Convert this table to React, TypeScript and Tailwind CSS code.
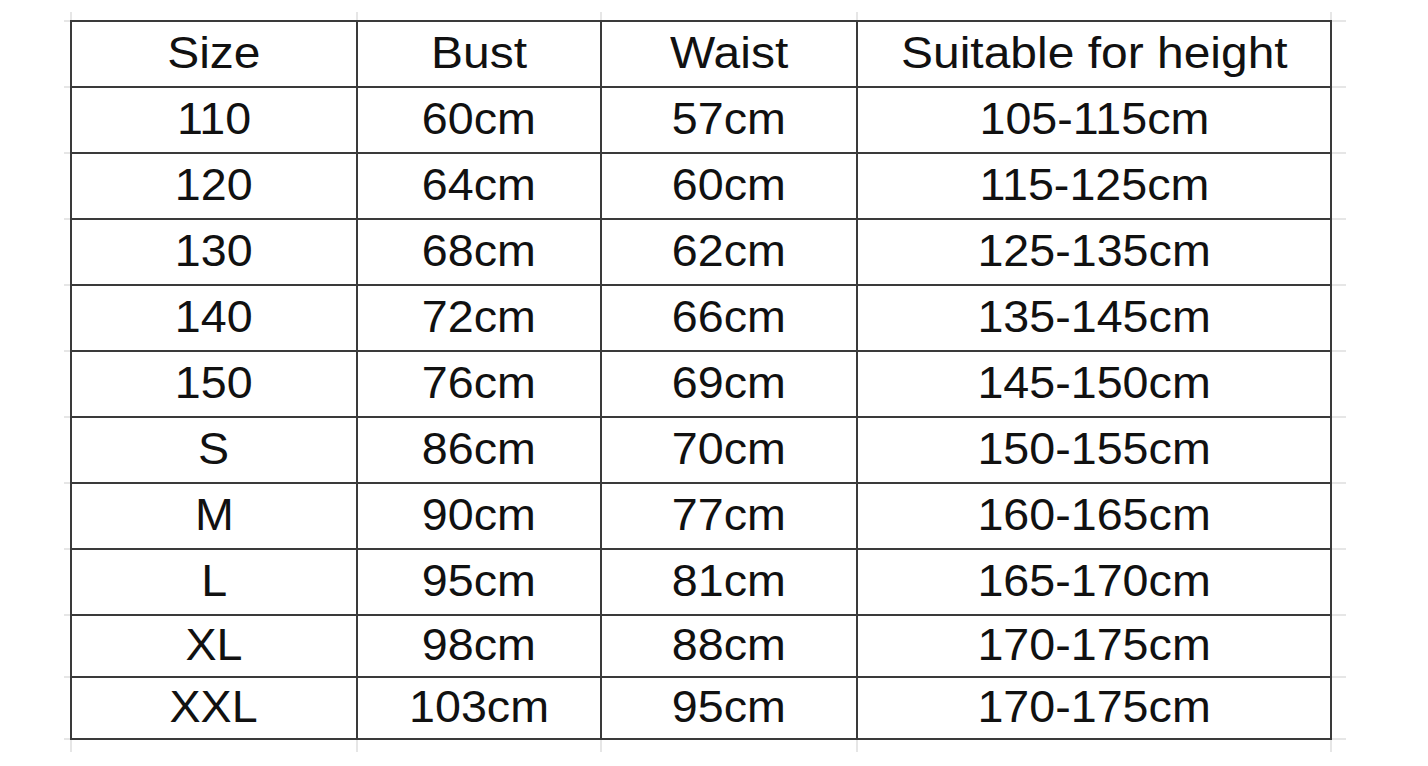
const COLS = ["w-[286px]", "w-[244px]", "w-[256px]", "w-[474px]"];

const HEADER = ["Size", "Bust", "Waist", "Suitable for height"];

const ROWS: { cells: string[]; h: string }[] = [
  { cells: ["110", "60cm", "57cm", "105-115cm"], h: "h-[66px]" },
  { cells: ["120", "64cm", "60cm", "115-125cm"], h: "h-[66px]" },
  { cells: ["130", "68cm", "62cm", "125-135cm"], h: "h-[66px]" },
  { cells: ["140", "72cm", "66cm", "135-145cm"], h: "h-[66px]" },
  { cells: ["150", "76cm", "69cm", "145-150cm"], h: "h-[66px]" },
  { cells: ["S", "86cm", "70cm", "150-155cm"], h: "h-[66px]" },
  { cells: ["M", "90cm", "77cm", "160-165cm"], h: "h-[66px]" },
  { cells: ["L", "95cm", "81cm", "165-170cm"], h: "h-[66px]" },
  { cells: ["XL", "98cm", "88cm", "170-175cm"], h: "h-[62px]" },
  { cells: ["XXL", "103cm", "95cm", "170-175cm"], h: "h-[62px]" },
];

const HEIGHTS = ["h-[66px]", ...ROWS.map((r) => r.h)];

function Stubs({ h }: { h: string }) {
  // faint spreadsheet gridlines poking out above/below the table
  return (
    <div className={`ml-[6px] flex border-l-2 border-[#e6e6e6] ${h}`}>
      {COLS.map((c, i) => (
        <div key={i} className={`${c} border-r-2 border-[#e6e6e6]`} />
      ))}
    </div>
  );
}

function SideStubs({ w }: { w: string }) {
  return (
    <div className={`${w} flex flex-col border-t-2 border-[#e6e6e6]`}>
      {HEIGHTS.map((h, i) => (
        <div key={i} className={`${h} border-b-2 border-[#e6e6e6]`} />
      ))}
    </div>
  );
}

function Row({ cells, h, head }: { cells: string[]; h: string; head?: boolean }) {
  return (
    <div className="flex">
      {cells.map((t, i) => (
        <div
          key={i}
          className={`${COLS[i]} ${h} flex items-center justify-center border-r-2 border-b-2 border-[#3a3a3a] pb-[3px]`}
        >
          <span className={`inline-block leading-none ${head ? "scale-x-[1.09]" : "scale-x-[1.06]"}`}>
            {t}
          </span>
        </div>
      ))}
    </div>
  );
}

export default function App() {
  return (
    <div
      className="w-[1428px] h-[766px] bg-white text-[44px] text-[#111] pt-[12px] pl-[64px]"
      style={{ fontFamily: '"Liberation Sans", Arial, sans-serif' }}
    >
      <Stubs h="h-[8px]" />
      <div className="flex">
        <SideStubs w="w-[6px]" />
        <div className="flex flex-col border-t-2 border-l-2 border-[#3a3a3a]">
          <Row cells={HEADER} h="h-[66px]" head />
          {ROWS.map((r, i) => (
            <Row key={i} cells={r.cells} h={r.h} />
          ))}
        </div>
        <SideStubs w="w-[14px]" />
      </div>
      <Stubs h="h-[12px]" />
    </div>
  );
}
